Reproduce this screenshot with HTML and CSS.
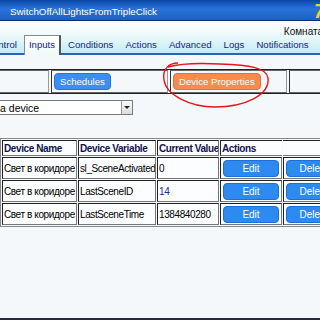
FILE: index.html
```html
<!DOCTYPE html>
<html lang="en">
<head>
    <meta charset="UTF-8">
    <title>SwitchOffAllLightsFromTripleClick</title>
    <link rel="stylesheet" href="styles.css">
</head>
<body>
    <div class="titlebar">
        <span class="title">SwitchOffAllLightsFromTripleClick</span>
        <span class="logo">7</span>
    </div>

    <div class="header">
        <div class="room">Комната</div>
        <ul class="tabs">
            <li>Control</li>
            <li class="active">Inputs</li>
            <li>Conditions</li>
            <li>Actions</li>
            <li>Advanced</li>
            <li>Logs</li>
            <li>Notifications</li>
        </ul>
    </div>

    <div class="content">
        <table class="subtabs">
            <tr>
                <td></td>
                <td><button class="btn btn-blue">Schedules</button></td>
                <td><button class="btn btn-orange">Device Properties</button></td>
                <td></td>
            </tr>
        </table>

        <div class="select-box">
            <select class="device-select">
                <option>Select a device</option>
            </select>
            <span class="select-arrow"></span>
        </div>

        <table class="vars">
            <tr>
                <th class="c1">Device Name</th>
                <th class="c2">Device Variable</th>
                <th class="c3">Current Value</th>
                <th class="c4">Actions</th>
                <th class="c5"></th>
            </tr>
            <tr>
                <td>Свет в коридоре</td>
                <td>sl_SceneActivated</td>
                <td>0</td>
                <td><button class="btn btn-edit">Edit</button></td>
                <td><button class="btn btn-edit">Delete</button></td>
            </tr>
            <tr>
                <td>Свет в коридоре</td>
                <td>LastSceneID</td>
                <td class="num">14</td>
                <td><button class="btn btn-edit">Edit</button></td>
                <td><button class="btn btn-edit">Delete</button></td>
            </tr>
            <tr>
                <td>Свет в коридоре</td>
                <td>LastSceneTime</td>
                <td>1384840280</td>
                <td><button class="btn btn-edit">Edit</button></td>
                <td><button class="btn btn-edit">Delete</button></td>
            </tr>
        </table>
    </div>

    <div class="taskbar"></div>

    <!-- hand-drawn highlight around the Device Properties button -->
    <svg class="mark" width="320" height="320" viewBox="0 0 320 320">
        <path d="M178 63 C169 63, 162 69, 164 80 C166 95, 190 107, 215 107 C245 107, 270 95, 268 78 C267 68, 250 65, 220 64 C200 63, 182 63, 168 67"
              fill="none" stroke="#e8141c" stroke-width="1.4"/>
    </svg>
</body>
</html>
```

FILE: styles.css
```css
* {
    margin: 0;
    padding: 0;
    box-sizing: border-box;
}

body {
    font-family: 'Liberation Sans', Arial, sans-serif;
    font-size: 10px;
    width: 320px;
    height: 320px;
    overflow: hidden;
    background: #f4f8fa;
    display: flex;
    flex-direction: column;
    position: relative;
}

.titlebar {
    height: 21px;
    background: linear-gradient(#0a47a6 0%, #2a73d8 45%, #1b5fc6 100%);
    border-bottom: 1px solid #0c2f78;
    display: flex;
    align-items: center;
    justify-content: space-between;
    padding: 2px 0 0 10px;
    color: #fff;
    flex-shrink: 0;
}

.title {
    font-size: 9.8px;
}

.logo {
    color: #f5d21a;
    font-size: 20px;
    font-weight: bold;
    font-style: italic;
    margin-right: -5px;
}

.header {
    height: 34px;
    border-top: 1px solid #fff;
    background: linear-gradient(#ffffff 0%, #eefafc 40%, #c4ecf3 100%);
    border-bottom: 2px solid #2a62b8;
    display: flex;
    flex-direction: column;
    justify-content: flex-end;
    flex-shrink: 0;
}

.room {
    text-align: right;
    color: #111;
    margin-right: -3px;
    margin-bottom: -3px;
    line-height: 12px;
    white-space: nowrap;
}

.tabs {
    list-style: none;
    display: flex;
    gap: 2px;
    margin-left: -19px;
    white-space: nowrap;
    font-size: 9.6px;
}

.tabs li {
    color: #15238a;
    padding: 2px 4px 2px;
    line-height: 13px;
    border: 1px solid transparent;
    border-bottom: none;
}

.tabs li.active {
    background: linear-gradient(#ffffff, #f0fbfd);
    border-color: #8a8a8a;
    border-right: 2px solid #555;
    margin-bottom: -2px;
    padding-bottom: 4px;
}

.content {
    flex: 1;
    padding-top: 14px;
}

.subtabs {
    border-collapse: separate;
    border-spacing: 2px 0;
    border-top: 1px solid #222;
    border-bottom: 1px solid #222;
    margin-left: -70px;
    width: 472px;
    table-layout: fixed;
}

.subtabs td {
    width: 117px;
    height: 22px;
    padding: 2px 2px;
    border-left: 1px solid #333;
    border-right: 1px solid #999;
    border-top: 1px solid #666;
    border-bottom: 1px solid #666;
    vertical-align: middle;
}

.btn {
    font-family: 'Liberation Sans', Arial, sans-serif;
    font-size: 9.6px;
    color: #fff;
    border-radius: 4px;
    cursor: pointer;
}

.btn-blue {
    background: #3b8ff2;
    border: 1px solid #2b72d8;
    padding: 2px 5px;
}

.btn-orange {
    background: #f58c4e;
    border: 1px solid #e0733a;
    padding: 2px 5px;
}

.select-box {
    display: flex;
    width: 168px;
    height: 15px;
    margin: 6px 0 0 -35px;
    border: 1px solid #7a7a7a;
    background: #fff;
}

.device-select {
    appearance: none;
    -webkit-appearance: none;
    flex: 1;
    border: none;
    background: transparent;
    font-family: 'Liberation Sans', Arial, sans-serif;
    font-size: 10.5px;
    color: #000;
    padding-left: 2px;
    outline: none;
}

.select-arrow {
    width: 11px;
    border-left: 1px solid #999;
    background: linear-gradient(#fafafa, #dcdcdc);
    display: flex;
    align-items: center;
    justify-content: center;
}

.select-arrow::after {
    content: '';
    border-left: 3px solid transparent;
    border-right: 3px solid transparent;
    border-top: 3px solid #222;
}

.vars {
    margin-top: 23px;
    border-collapse: separate;
    border-spacing: 1px;
    border: 1px solid #888;
    table-layout: fixed;
    width: 347px;
    white-space: nowrap;
    font-size: 10px;
}

.vars th,
.vars td {
    border: 1px solid #222;
    border-right-color: #777;
    border-bottom-color: #777;
    background: #fbfdfe;
    padding: 0 1px;
    text-align: left;
    overflow: hidden;
}

.vars th {
    height: 16px;
    color: #111150;
    font-weight: bold;
    letter-spacing: -0.4px;
}

.vars th.c4 {
    overflow: visible;
    border-right: none;
    position: relative;
    z-index: 1;
}

.vars th.c5 {
    border-left: none;
}

.vars td {
    height: 22px;
    color: #000;
    letter-spacing: -0.4px;
}

.vars td.num {
    color: #1a2a8a;
}

.vars .c1 { width: 75px; }
.vars .c2 { width: 78px; }
.vars .c3 { width: 62px; }
.vars .c4 { width: 62px; }
.vars .c5 { width: 62px; }

.btn-edit {
    width: 56px;
    height: 17px;
    background: #2d8af0;
    border: 1px solid #1d6fd6;
    display: block;
    margin: 0 auto;
    letter-spacing: 0;
    font-size: 10px;
}

.taskbar {
    height: 2px;
    background: #262c3a;
    flex-shrink: 0;
}

.mark {
    position: absolute;
    top: 0;
    left: 0;
    pointer-events: none;
}
```
